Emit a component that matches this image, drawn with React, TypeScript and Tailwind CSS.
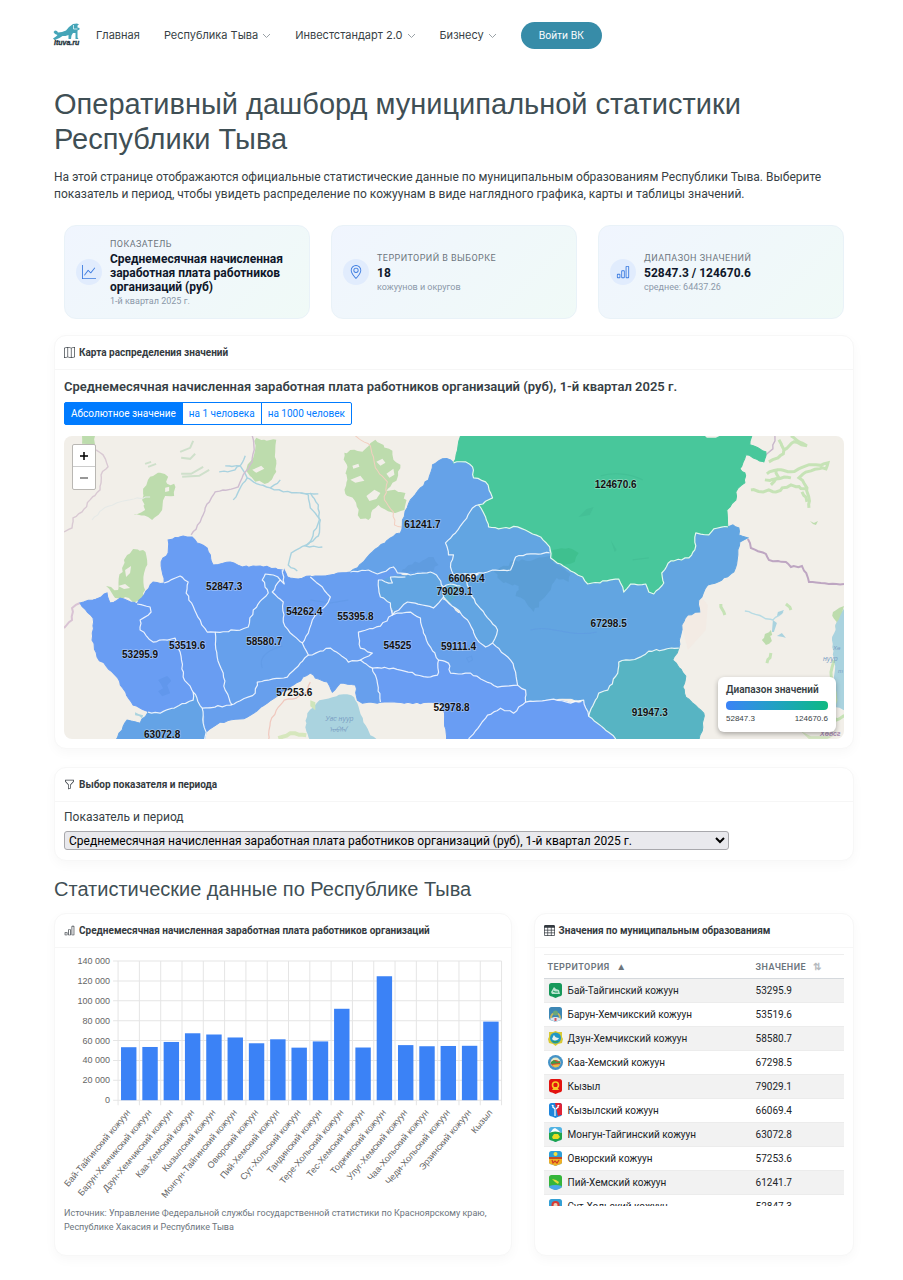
import { useState, type ReactNode } from "react";
import { BsBarChart, BsFunnel, BsGeoAlt, BsGraphUp, BsMap, BsTable } from "react-icons/bs";

type Point = [number, number];

const navItems = [
  { label: "Главная", menu: false },
  { label: "Республика Тыва", menu: true },
  { label: "Инвестстандарт 2.0", menu: true },
  { label: "Бизнесу", menu: true },
];

const indicator = "Среднемесячная начисленная заработная плата работников организаций (руб), 1-й квартал 2025 г.";

const chartData = [
  { name: "Бай-Тайгинский кожуун", value: 53295.9 },
  { name: "Барун-Хемчикский кожуун", value: 53519.6 },
  { name: "Дзун-Хемчикский кожуун", value: 58580.7 },
  { name: "Каа-Хемский кожуун", value: 67298.5 },
  { name: "Кызылский кожуун", value: 66069.4 },
  { name: "Монгун-Тайгинский кожуун", value: 63072.8 },
  { name: "Овюрский кожуун", value: 57253.6 },
  { name: "Пий-Хемский кожуун", value: 61241.7 },
  { name: "Сут-Хольский кожуун", value: 52847.3 },
  { name: "Тандинский кожуун", value: 59111.4 },
  { name: "Тере-Хольский кожуун", value: 91947.3 },
  { name: "Тес-Хемский кожуун", value: 52978.8 },
  { name: "Тоджинский кожуун", value: 124670.6 },
  { name: "Улуг-Хемский кожуун", value: 55395.8 },
  { name: "Чаа-Хольский кожуун", value: 54262.4 },
  { name: "Чеди-Хольский кожуун", value: 54525 },
  { name: "Эрзинский кожуун", value: 54700 },
  { name: "Кызыл", value: 79029.1 },
];

// Small noise that depends only on the position, so shared borders stay shared
const noise = (x: number, y: number) => {
  const n = Math.sin(x * 12.9898 + y * 78.233) * 43758.5453;
  return (n - Math.floor(n) - 0.5) * 2;
};

// Turns "x,y x,y" into a slightly ragged path, like a real border line
const rough = (points: string, closed = false, amount = 0.9) => {
  const list = points.split(" ").map((p) => p.split(",").map(Number) as Point);
  if (closed) list.push(list[0]);
  let d = `M${list[0][0]} ${list[0][1]}`;
  for (let i = 1; i < list.length; i++) {
    const [x1, y1] = list[i - 1];
    const [x2, y2] = list[i];
    const steps = Math.max(1, Math.round(Math.hypot(x2 - x1, y2 - y1) / 4));
    for (let s = 1; s <= steps; s++) {
      const x = x1 + ((x2 - x1) * s) / steps;
      const y = y1 + ((y2 - y1) * s) / steps;
      const k = s === steps ? 0 : amount;
      d += `L${(x + noise(x, y) * k).toFixed(1)} ${(y + noise(y, x) * k).toFixed(1)}`;
    }
  }
  return closed ? d + "Z" : d;
};

const regions = [
  { fill: "#699df3", d: "80,603 93,600 107,593 110,603 120,598 137,604 150,607 151,612 140,620 140,630 153,642 175,638 180,652 183,677 193,692 193,700 160,713 150,713 133,705 115,675 97,657 92,640 93,618" },
  { fill: "#699df2", d: "137,604 153,582 164,583 180,576 188,582 186,593 200,620 207,632 215,632 217,657 223,673 225,690 232,705 202,708 193,692 183,677 180,652 175,638 153,642 140,630 140,620 151,612 150,607" },
  { fill: "#699df3", d: "164,583 161,562 168,553 168,540 183,536 192,537 197,543 207,548 213,565 230,562 242,567 260,566 282,570 287,577 280,580 273,575 265,574 262,580 268,593 253,610 248,627 240,630 215,632 207,632 200,620 186,593 188,582 180,576" },
  { fill: "#66a0ec", d: "215,632 240,630 248,627 253,610 268,593 262,580 265,574 273,575 280,580 272,592 283,602 283,622 290,633 302,643 308,655 287,677 257,682 255,693 232,705 225,690 223,673 217,657" },
  { fill: "#689df1", d: "280,580 284,570 287,577 298,579 310,576 322,587 330,597 328,602 317,613 312,620 308,633 302,643 290,633 283,622 283,602 272,592" },
  { fill: "#689ef0", d: "310,577 330,575 350,572 368,570 377,574 393,567 397,573 405,577 390,577 378,582 380,597 390,603 392,615 380,626 358,632 360,648 372,653 360,660 348,662 330,648 310,655 308,655 302,643 308,633 312,620 317,613 328,602 330,597 322,587" },
  { fill: "#65a2e8", d: "350,572 363,562 372,552 390,538 400,533 402,520 410,500 420,488 428,480 432,465 442,459 450,460 453,463 465,462 472,467 473,478 485,482 492,498 478,505 472,508 463,522 455,533 445,543 448,555 453,555 450,567 453,575 443,587 438,578 430,572 410,575 397,573 393,567 377,574 368,570" },
  { fill: "#62a5e1", d: "549,553 580,560 653,580 694,533 713,529 727,527 732,525 738,528 738,535 747,538 739,542 737,555 733,572 717,582 707,585 698,600 699,612 687,615 681,625 678,648 648,651 637,658 618,662 617,673 607,690 598,693 588,716 583,702 570,698 553,699 525,702 525,690 517,685 515,672 510,660 492,643 497,630 475,603 466,580 483,573 492,570 510,570 515,557 530,554" },
  { fill: "#62a5e2", d: "478,505 485,517 488,527 498,529 517,527 540,537 549,547 549,553 530,554 515,557 510,570 492,570 483,573 466,574 470,593 475,603 497,630 492,643 485,647 477,640 467,620 443,597 440,603 433,608 407,602 393,613 390,603 380,597 378,582 390,577 410,575 430,572 438,578 443,587 453,575 450,567 453,555 448,555 445,543 455,533 463,522 472,508" },
  { fill: "#5dacd2", d: "444,588 450,584 460,586 457,594 449,602 443,597" },
  { fill: "#689df1", d: "392,615 397,613 410,612 420,618 423,633 430,647 438,660 437,675 427,677 393,668 372,668 360,660 372,653 360,648 358,632 380,626" },
  { fill: "#66a0eb", d: "393,613 407,602 433,608 443,600 467,620 477,640 485,647 492,643 510,660 515,672 517,685 497,687 470,673 450,673 448,663 438,660 430,647 423,633 420,618 410,612" },
  { fill: "#699df3", d: "360,660 372,668 393,668 427,677 437,675 438,660 448,663 450,673 470,673 497,687 517,685 525,690 525,702 553,699 570,703 583,702 588,716 603,728 617,741 446,741 444,713 440,703 380,702 377,683" },
  { fill: "#679fed", d: "202,708 230,705 255,693 257,682 287,677 308,655 330,648 348,662 360,660 372,668 377,683 380,702 362,703 357,700 355,685 340,683 332,692 327,682 315,678 310,673 293,685 267,703 247,717 220,722 206,732" },
  { fill: "#64a3e6", d: "148,712 160,713 193,700 193,692 202,708 203,723 206,732 204,741 115,741 122,730 127,720 140,723" },
  { fill: "#57b4c3", d: "678,648 648,651 637,658 618,662 617,673 607,690 598,693 588,716 603,728 617,741 698,741 702,727 703,713 685,697 682,687 685,676 672,660" },
  { fill: "#48c79b", d: "460,433 752,433 749,445 765,452 763,462 745,455 739,469 744,473 744,483 735,492 735,500 726,510 727,527 713,529 708,535 695,533 694,550 688,558 670,561 661,573 663,583 653,594 648,592 645,584 630,584 623,592 618,579 587,584 582,577 570,571 550,558 549,547 540,537 517,527 498,529 488,527 485,517 478,505 492,498 485,482 473,478 472,467 465,462 453,463 457,450" },
];

const borders = [
  "137,604 150,607 151,612 140,620 140,630 153,642 175,638 180,652 183,677 193,692 202,708 203,723 206,732 204,741",
  "148,712 160,713 193,700 193,692",
  "164,583 180,576 188,582 186,593 200,620 207,632 215,632 217,657 223,673 225,690 232,705",
  "202,708 230,705 255,693 257,682 287,677 308,655 302,643 290,633 283,622 283,602 272,592 280,580 273,575 265,574 262,580 268,593 253,610 248,627 240,630 215,632",
  "282,570 284,584 280,580",
  "310,577 322,587 330,597 328,602 317,613 312,620 308,633 302,643",
  "308,655 330,648 348,662 360,660 372,668 377,683 380,702",
  "360,660 372,653 360,648 358,632 380,626 392,615 397,613 410,612 420,618 423,633 430,647 438,660 437,675 427,677 393,668 372,668",
  "350,572 368,570 377,574 393,567 397,573 410,575 430,572 438,578 443,587 450,584 460,586",
  "405,577 390,577 392,583 378,580 380,597 390,603 392,615 407,602 433,608 443,597 443,587",
  "443,597 467,620 477,640 485,647 492,643 497,630 475,603 470,593 466,580 470,574",
  "453,575 483,573 492,570 510,570 515,557 530,554 549,553",
  "453,575 450,567 453,555 448,555 445,543 455,533 463,522 472,508 478,505",
  "492,643 510,660 515,672 517,685 497,687 470,673 450,673 448,663 438,660",
  "517,685 525,690 525,702 513,713 500,708 487,715 467,741",
  "525,702 553,699 570,703 583,700 588,716",
  "678,648 648,651 637,658 618,662 617,673 607,690 598,693 588,716 603,728 617,741",
  "727,527 713,529 708,535 695,533 694,550 688,558 670,561 661,573 663,583 653,594 648,592 645,584 630,584 623,592 618,579 587,584 582,577 570,571 550,558 549,547 540,537 517,527 498,529 488,527 485,517 478,505 492,498 485,482 473,478 472,467 465,462 453,463",
];

const forests = [
  "82,436 95,436 95,445 82,444",
  "143,489 150,477 160,473 168,477 167,484 174,484 174,496 165,496 162,510 152,520 148,517 133,515 145,510 142,500",
  "127,555 133,549 143,550 147,560 144,573 145,590 143,600 135,602 125,597 115,598 106,586 118,590 122,568",
  "256,438 264,440 276,440 276,472 268,483 255,482 246,470 253,458",
  "344,453 354,450 362,452 375,440 392,451 393,460 400,465 396,481 386,491 400,492 405,493 404,510 395,513 378,505 372,510 368,520 360,519 354,500 345,494 347,480",
  "832,612 843,606 843,625 836,630",
  "764,634 770,630 771,641 765,645 761,640",
  "809,521 813,523 817,521 815,525 812,524",
];

const greenStrokes = [
  "778,440 783,450 777,458 768,462",
  "783,450 793,442 806,446 790,436",
  "766,474 780,470 790,472 805,466 827,463 825,469 810,471 798,478 806,488 808,508",
  "750,490 775,492 790,485 805,489",
  "770,485 778,478 775,470",
  "764,480 790,478",
  "801,492 806,502",
  "720,604 724,615",
  "770,653 766,663",
  "785,604 790,610",
];

const rivers = [
  "219,472 231,471 240,466 247,478 260,485 270,488 283,492 300,493 308,495 310,508 320,520 318,536 306,545 291,553 288,565 297,571",
  "310,493 318,505 319,520 311,540 305,546 322,547",
  "225,466 240,466 245,456",
  "247,478 239,490 233,500",
  "270,488 280,480",
  "300,493 318,494",
];

const mapLabels = [
  { x: 615, y: 488, text: "124670.6" },
  { x: 422, y: 528, text: "61241.7" },
  { x: 466, y: 582, text: "66069.4" },
  { x: 454, y: 595, text: "79029.1" },
  { x: 224, y: 590, text: "52847.3" },
  { x: 304, y: 615, text: "54262.4" },
  { x: 355, y: 620, text: "55395.8" },
  { x: 608, y: 627, text: "67298.5" },
  { x: 264, y: 645, text: "58580.7" },
  { x: 187, y: 649, text: "53519.6" },
  { x: 397, y: 649, text: "54525" },
  { x: 458, y: 650, text: "59111.4" },
  { x: 140, y: 658, text: "53295.9" },
  { x: 294, y: 696, text: "57253.6" },
  { x: 451, y: 711, text: "52978.8" },
  { x: 649, y: 716, text: "91947.3" },
  { x: 162, y: 738, text: "63072.8" },
];

const RegionMap = () => (
  <svg
    className="block h-full w-full font-['Liberation_Sans',sans-serif]"
    viewBox="64 436 779 303"
    preserveAspectRatio="xMidYMid slice"
    role="img"
    aria-label="Карта распределения значений"
  >
    <rect x="0" y="400" width="1000" height="400" fill="#f2efe9" />
    {forests.map((d) => (
      <path key={d} d={rough(d, true, 1.6)} fill="#bddcad" />
    ))}
    <path
      d="M125 570l6-4-1 7-4 4zM252 470l9-4 3 3-8 4zM350 480l10-4 4 5-9 2zM376 462l6-3 3 4-5 3zM366 496l8-6 6 3-4 6-7 2zM352 466l6-2 1 3-6 2zM386 474l7-5 1 6-5 3zM118 586l7-2 5 4-6 1zM165 488l4-1v4l-4 1z"
      fill="#f2efe9"
    />
    {greenStrokes.map((d) => (
      <path key={d} d={rough(d, false, 1.5)} fill="none" stroke="#c6e3b6" strokeWidth="3" />
    ))}
    <path d="M180 452l10-4 3-7m-12 17l9 1 5-5m-47 13l8-3m25 10l10 0 12-7M182 477l17-1 10-6M145 464l6-2" fill="none" stroke="#cfe0cb" strokeWidth="2" />
    {rivers.map((d) => (
      <path key={d} d={rough(d)} fill="none" stroke="#a9d2df" strokeWidth="1.4" />
    ))}
    <path d={rough("92,520 102,510 120,502 134,499 150,497")} fill="none" stroke="#e5e9e7" strokeWidth="1" />
    <path d={rough("96,450 103,455 108,467 101,475 100,490 90,500 82,512 73,518 72,528 64,532")} fill="none" stroke="#d9c9d3" strokeWidth="1.4" />
    <path d={rough("191,535 200,522 205,508 215,492 238,487 243,475 252,462 254,450 252,436")} fill="none" stroke="#cfbdd0" strokeWidth="1.4" />
    <path d={rough("80,603 72,608 72,620 64,628")} fill="none" stroke="#d9c3d4" strokeWidth="2" />
    <path d={rough("747,539 750,548 765,554 768,560 785,562 790,567 801,566 808,582 820,583 843,584")} fill="none" stroke="#bea6c2" strokeWidth="2" />
    <path d={rough("774,436 772,449 765,455")} fill="none" stroke="#c8b6cb" strokeWidth="1.4" />
    <path d={rough("355,436 370,446 375,468 387,482 384,500 393,512 394,525 401,527")} fill="none" stroke="#f3cfc0" strokeWidth="1" />
    <path d="M681 625l18-30 8 10-2 25-18 20z" fill="#f3ebe4" />
    <path d={rough("744,611 762,617 772,620 782,612")} fill="none" stroke="#b7dbe4" strokeWidth="1.4" />
    <path d="M772 620l4 3-3 9-2 0zM777 612l6-2-2 4-5 2zM776 636l5-3 4 5-3-1z" fill="#aad3df" />

    {/* Lakes */}
    <path d={rough("313,707 319,700 332,697 343,694 351,695 357,703 363,722 370,735 381,741 310,741 305,727 307,713", true)} fill="#aad3df" />
    <path d={rough("836,622 845,606 845,710 835,707 831,690 834,670 831,640", true)} fill="#aad3df" />
    <path d={rough("833,660 830,672 835,700 829,712 835,720 845,715", false)} fill="none" stroke="#c6e3b6" strokeWidth="3" />
    <path d={rough("135,712 143,715 142,718 135,715", true)} fill="#aad3df" />
    <path d={rough("268,741 270,722 276,710 284,700 296,698 306,692 310,682")} fill="none" stroke="#f0c7bd" strokeWidth="1.2" />
    <path d={rough("278,738 290,733 306,735")} fill="none" stroke="#d6e7bd" strokeWidth="4" />
    <path d="M310 700l5 2v8l-5-4z" fill="#cfe5bb" />
    <path d="M800 731l10 5h22l-6 3h-18z" fill="#d5e6c2" />
    <g fill="#7b9fc4" fontSize="7" fontStyle="italic">
      <text x="325" y="721">Увс нуур</text>
      <text x="329" y="732">ᠤᠪᠰᠠ</text>
      <text x="832" y="650" fontSize="6">Хө</text>
      <text x="822" y="661">нуур</text>
      <text x="837" y="673" fontSize="6">т</text>
    </g>
    <text x="819" y="736" fontSize="7" fontStyle="italic" fontWeight="bold" fill="#a487ad">Хөвсг</text>

    {regions.map(({ fill, d }) => (
      <path key={d} d={rough(d, true)} fill={fill} stroke={fill} strokeWidth="1" />
    ))}

    {/* Relief and water seen through the fills */}
    <path
      d={rough("493,571 508,566 514,560 530,561 549,556 553,563 570,574 568,582 556,578 550,590 541,600 533,612 524,600 515,596 518,586 503,583", true, 1.6)}
      fill="#5799cf"
      opacity=".6"
    />
    <path d={rough("398,575 408,565 433,557 438,565 430,573 410,571", true, 1.4)} fill="#5c98da" opacity=".6" />
    <path d={rough("552,550 568,548 578,553 574,562 562,566 552,561", true)} fill="#3fc08f" />
    <path d={rough("158,680 167,676 171,681 167,685 170,693 162,696 158,691 163,688", true)} fill="#6197ec" />
    <path d="M578 517l8-8 7-2-4 8zM610 540l6 10-2 2z" fill="#44c096" />
    <path d="M600 476c14-4 30-2 42 4M632 560l16-2" fill="none" stroke="#44c096" strokeWidth="1.2" />
    <path d="M310 600l20 3 18-3M262 668c-4-12 6-18 20-22M530 630c20-6 40 8 66 2M466 658l5-2 1 4-4 2z" fill="none" stroke="#5d98e4" strokeWidth="1" opacity=".5" />

    {borders.map((d) => (
      <path key={d} d={rough(d)} fill="none" stroke="#fff" strokeWidth="1.200" strokeOpacity=".85" strokeLinejoin="round" />
    ))}
    <path d="M704 436h15l-4 2h-9z" fill="#f2efe9" />

    <g fontSize="10" fontWeight="bold" fill="#111" textAnchor="middle">
      {mapLabels.map(({ x, y, text }) => (
        <text key={text} x={x} y={y} className="[paint-order:stroke]" stroke="#fff" strokeOpacity=".35" strokeWidth="1.4">
          {text}
        </text>
      ))}
    </g>
  </svg>
);

const BarChart = () => {
  const left = 54;
  const bottom = 145;
  const step = 383 / 18;
  const scale = 139 / 140000;
  const ticks = [0, 20000, 40000, 60000, 80000, 100000, 120000, 140000];
  return (
    <svg
      className="block w-full overflow-visible font-['Liberation_Sans',sans-serif]"
      viewBox="0 0 437 245"
      role="img"
      aria-label="Среднемесячная начисленная заработная плата по кожуунам"
    >
      {ticks.map((tick) => {
        const y = bottom - tick * scale;
        return (
          <g key={tick}>
            <path d={`M${left - 5} ${y}H437`} stroke="#e5e5e5" />
            <text x={left - 8} y={y + 3} fontSize="9" fill="#666" textAnchor="end">
              {tick === 0 ? "0" : `${tick / 1000} 000`}
            </text>
          </g>
        );
      })}
      {Array.from({ length: 19 }, (_, i) => (
        <path key={i} d={`M${left + i * step} 6V${bottom + 5}`} stroke="#e5e5e5" />
      ))}
      {chartData.map(({ name, value }, i) => {
        const x = left + (i + 0.5) * step;
        return (
          <g key={name}>
            <rect x={x - 7.7} y={bottom - value * scale} width="15.4" height={value * scale} fill="#3b82f6" />
            <text
              transform={`translate(${x - 1} ${bottom + 10}) rotate(-50)`}
              y="4"
              fontSize="9"
              fill="#666"
              textAnchor="end"
            >
              {name}
            </text>
          </g>
        );
      })}
    </svg>
  );
};

const shield = "M1 3.5Q1 1 3.5 1H11.500Q14 1 14 3.500V12Q14 14 11 14.500L7.500 16L4 14.500Q1 14 1 12Z";

const emblems: ReactNode[] = [
  <>
    <path d={shield} fill="#16985a" />
    <path d="M3 10l3-5 2 2 3 1 1 4H4z" fill="#b9e3cf" />
    <path d="M5 9l2 1 3 0" stroke="#16985a" fill="none" />
  </>,
  <>
    <path d={shield} fill="#3d87b5" />
    <path d="M3 12a4.500 5 0 0 1 9 0" fill="none" stroke="#c6b75f" strokeWidth="2" />
    <circle cx="7.500" cy="7" r="2.500" fill="#69a77b" />
    <path d="M1 13l5-2h3l5 2-6 3z" fill="#d9e6ef" />
    <path d="M6.500 12h2v3h-2z" fill="#d4545d" />
  </>,
  <>
    <path d="M1 2l4 0 2.500-1L10 2h4v5l1 2-1 4-4 1-2.500 2L5 14l-4-1-1-4 1-2z" fill="#d8c932" />
    <circle cx="7.500" cy="8" r="5.500" fill="#2097c4" />
    <path d="M4 9c3 3 6 1 7-1-3 0-4-1-5-3-1 1-1 2-2 4z" fill="#e9f3ee" />
    <path d="M4 11c2 2 5 2 7 0z" fill="#2f9f57" />
  </>,
  <>
    <circle cx="7.500" cy="8.500" r="7.500" fill="#4593c7" />
    <circle cx="7.500" cy="8.500" r="5" fill="#e7e8c8" />
    <path d="M2.500 9c3-4 7-4 10 0-1 5-8 6-10 0z" fill="#d34c30" />
    <path d="M3 8l3-2 3 2 3-1v2l-9 1z" fill="#3f9848" />
    <path d="M4 11l8-1-2 3H6z" fill="#e6c044" />
  </>,
  <>
    <path d={shield} fill="#e3130f" />
    <circle cx="7.500" cy="7" r="3" fill="none" stroke="#f6ca25" strokeWidth="1.600" />
    <path d="M4 12l2-3h3l2 3z" fill="#f6ca25" />
  </>,
  <>
    <path d={shield} fill="#1f86dc" />
    <path d="M7 1h5q2 0 2 3v9q-3 0-4 1z" fill="#df2436" />
    <path d="M4 3l2 3 1 1v7M11 3L9 6 8 7M5 3v3m5-3v3" stroke="#fff" strokeWidth="1.200" fill="none" />
  </>,
  <>
    <path d={shield} fill="#52b3e3" />
    <path d="M2 7l3-4 2-1 3 2 3 3z" fill="#fff" />
    <path d="M1 7q6-3 13 0v5q0 2-3 2.500L7.500 16 4 14.500Q1 14 1 12z" fill="#1fa54a" />
    <path d="M4 11l2-3h4l2 3-2 2H5z" fill="#e7dd20" />
  </>,
  <>
    <path d={shield} fill="#2d9ed6" />
    <circle cx="7.500" cy="4" r="2" fill="#f5df3a" />
    <path d="M1 7h13v3H1z" fill="#c54b22" />
    <path d="M1 9h13v3q0 2-3 2.500L7.500 16 4 14.500Q1 14 1 12z" fill="#efb026" />
    <path d="M4 10l1 3 2-2 2 2 2-3" stroke="#cf3e23" strokeWidth="1.200" fill="none" />
  </>,
  <>
    <path d={shield} fill="#35b53a" />
    <path d="M4 5l4 1 3 2-1 2-3-2z" fill="#ddde3a" />
    <path d="M1 12q6-2 13 0-1 3-6.500 4Q2 15 1 12z" fill="#4aa6e8" />
  </>,
  <>
    <path d={shield} fill="#35a0d5" />
    <circle cx="7.500" cy="7" r="4" fill="#d93a34" />
    <circle cx="7.500" cy="7" r="2" fill="#ecd2b8" />
  </>,
];

const tableRows = [
  ["Бай-Тайгинский кожуун", "53295.9"],
  ["Барун-Хемчикский кожуун", "53519.6"],
  ["Дзун-Хемчикский кожуун", "58580.7"],
  ["Каа-Хемский кожуун", "67298.5"],
  ["Кызыл", "79029.1"],
  ["Кызылский кожуун", "66069.4"],
  ["Монгун-Тайгинский кожуун", "63072.8"],
  ["Овюрский кожуун", "57253.6"],
  ["Пий-Хемский кожуун", "61241.7"],
  ["Сут-Хольский кожуун", "52847.3"],
];

const Card = ({ icon, title, children }: { icon: ReactNode; title: string; children: ReactNode }) => (
  <section className="rounded-xl border border-[#f7f7f7] bg-white shadow-[0_4px_12px_rgba(0,0,0,0.03)]">
    <h3 className="flex h-[34px] items-center gap-1 border-b border-[#f6f6f6] px-[9px] text-[10px] font-bold text-[#343a40]">
      <span className="text-[11px]">{icon}</span>
      {title}
    </h3>
    {children}
  </section>
);

const StatCard = ({ icon, label, value, note }: { icon: ReactNode; label: string; value: string; note: string }) => (
  <div className="flex h-[94px] items-center gap-2 rounded-xl border border-[#e9f2f8] bg-linear-135 from-[#f0f5fe] to-[#f0faf7] px-[11px]">
    <div className="flex size-[26px] shrink-0 items-center justify-center rounded-full bg-[#e1ecfd] text-[14px] text-[#3b7be0]">
      {icon}
    </div>
    <div>
      <div className="text-[9px] leading-[16px] tracking-wider text-[#6c757d]">{label}</div>
      <div className="text-[12px] leading-[14px] font-bold text-[#0f172a]">{value}</div>
      <div className="text-[9px] leading-[14px] text-[#8b98a9]">{note}</div>
    </div>
  </div>
);

const Logo = () => (
  <svg className="h-6 w-[26px] overflow-visible" viewBox="0 0 26 24" role="img" aria-label="ituva.ru">
    <path
      d="M1 7.500l2 .500 1 1.500 4-.500 4-1.500 3-3.500 4-3 4-.500 2 1-1.500 1 0 2 2 .500 0 1.500-2 1 0 7 1 1.500h-3l0-6-2.500 0-1.500 2.500-.500 3.500h-2.500l0-4-3 1-3 0-3 2-5 2-1.500-1.500 3-2 1.500-1.500-2.500-1-1.500-2z"
      fill="#45a5b8"
    />
    <path d="M19.500 2l0 4 4 0" stroke="#e8f6f8" strokeWidth=".8" fill="none" />
    <text x="0" y="22" fontSize="7" fontWeight="bold" fontStyle="italic" fill="#20313a" stroke="#20313a" strokeWidth=".3" fontFamily="Liberation Sans, sans-serif">
      ituva.ru
    </text>
  </svg>
);

const App = () => {
  const modes = ["Абсолютное значение", "на 1 человека", "на 1000 человек"];
  const [mode, setMode] = useState(0);

  return (
    <div className="min-h-screen bg-white pr-[49px] pb-6 pl-[54px] font-['Roboto',sans-serif] text-[#373f45]">
      <header className="flex h-[70px] items-center gap-4">
        <a href="#">
          <Logo />
        </a>
        <nav className="flex items-center gap-6 font-['Inter',sans-serif] text-[11px] text-[#373f45]">
          {navItems.map(({ label, menu }) => (
            <a key={label} href="#" className="flex items-center gap-1 whitespace-nowrap">
              {label}
              {menu && (
                <svg className="size-[9px]" viewBox="0 0 9 9" fill="none" stroke="#9aa1a6">
                  <path d="M1 3l3.500 3.500L8 3" />
                </svg>
              )}
            </a>
          ))}
          <button className="h-[27px] rounded-full bg-[#378ca8] px-[18px] text-[10px] text-white">Войти ВК</button>
        </nav>
      </header>

      <main>
        <h1 className="mt-[17px] font-['Liberation_Sans',sans-serif] text-[29px] leading-[35px] text-[#3f4f55]">
          Оперативный дашборд муниципальной статистики Республики Тыва
        </h1>
        <p className="mt-3 text-[12px] leading-[17px]">
          На этой странице отображаются официальные статистические данные по муниципальным образованиям Республики Тыва. Выберите показатель и период, чтобы увидеть распределение по кожуунам в виде наглядного графика, карты и таблицы значений.
        </p>

        <div className="mt-[22px] grid grid-cols-3 gap-[21px] px-[10px]">
          <StatCard
            icon={<BsGraphUp />}
            label="ПОКАЗАТЕЛЬ"
            value="Среднемесячная начисленная заработная плата работников организаций (руб)"
            note="1-й квартал 2025 г."
          />
          <StatCard icon={<BsGeoAlt />} label="ТЕРРИТОРИЙ В ВЫБОРКЕ" value="18" note="кожуунов и округов" />
          <StatCard icon={<BsBarChart />} label="ДИАПАЗОН ЗНАЧЕНИЙ" value="52847.3 / 124670.6" note="среднее: 64437.26" />
        </div>

        <div className="mt-4">
          <Card icon={<BsMap />} title="Карта распределения значений">
            <div className="px-[9px] pt-2 pb-[9px]">
              <h4 className="text-[13px] leading-[18px] font-semibold">{indicator}</h4>
              <div className="mt-[6px] flex">
                {modes.map((label, i) => (
                  <button
                    key={label}
                    onClick={() => setMode(i)}
                    className={`-ml-px h-[23px] border border-[#007bff] px-[6px] text-[10px] first:ml-0 first:rounded-l-xs last:rounded-r-xs ${
                      mode === i ? "bg-[#007bff] text-white" : "bg-white text-[#007bff]"
                    }`}
                  >
                    {label}
                  </button>
                ))}
              </div>
              <div className="relative mt-[11px] h-[303px] overflow-hidden rounded-lg">
                <RegionMap />
                <div className="absolute top-2 left-2 flex w-6 flex-col rounded-xs border border-[#b9b7b3] bg-white">
                  <button aria-label="Приблизить" className="flex h-[22px] items-center justify-center border-b border-[#ccc]">
                    <svg className="size-[10px]" viewBox="0 0 10 10" stroke="#000" strokeWidth="1.500"><path d="M1 5h8M5 1v8" /></svg>
                  </button>
                  <button aria-label="Отдалить" className="flex h-[22px] items-center justify-center">
                    <svg className="size-[10px]" viewBox="0 0 10 10" stroke="#333" strokeWidth="1.200"><path d="M1 5h8" /></svg>
                  </button>
                </div>
                <div className="absolute right-2 bottom-[7px] w-[118px] rounded-md bg-white p-2 shadow-[0_2px_5px_rgba(0,0,0,0.3)]">
                  <div className="text-[10px] leading-[10px] font-semibold">Диапазон значений</div>
                  <div className="mt-[6px] h-[9px] rounded-sm bg-linear-to-r from-[#3b82f6] to-[#10b981]" />
                  <div className="mt-1 flex justify-between font-['Liberation_Sans',sans-serif] text-[8px] leading-[10px]">
                    <span>52847.3</span>
                    <span>124670.6</span>
                  </div>
                </div>
              </div>
            </div>
          </Card>
        </div>

        <div className="mt-[18px]">
          <Card icon={<BsFunnel />} title="Выбор показателя и периода">
            <div className="px-[9px] pt-[6px] pb-[10px]">
              <label htmlFor="indicator" className="block text-[12px] leading-[18px]">
                Показатель и период
              </label>
              <select
                id="indicator"
                className="mt-[5px] block h-[19px] w-[665px] max-w-full rounded-[3px] border border-[#a8a8ac] bg-[#e9e9ed] text-[12px] leading-[16px] text-black"
              >
                <option>{indicator}</option>
              </select>
            </div>
          </Card>
        </div>

        <h2 className="mt-[15px] font-['Liberation_Sans',sans-serif] text-[20px] leading-[26px] text-[#3f4f55]">
          Статистические данные по Республике Тыва
        </h2>

        <div className="mt-[11px] grid grid-cols-[457fr_320fr] gap-[22px]">
          <Card icon={<BsBarChart />} title="Среднемесячная начисленная заработная плата работников организаций">
            <div className="px-[9px] pt-[7px] pb-[21px]">
              <BarChart />
              <p className="mt-[6px] text-[9px] leading-[14px] text-[#6c757d]">
                Источник: Управление Федеральной службы государственной статистики по Красноярскому краю, Республике Хакасия и Республике Тыва
              </p>
            </div>
          </Card>

          <Card icon={<BsTable />} title="Значения по муниципальным образованиям">
            <div className="mx-[9px] mt-[6px] h-[252px] overflow-hidden border-t border-[#eee]">
              <table className="w-full table-fixed border-collapse text-left text-[10px] text-[#212529]">
                <thead>
                  <tr className="h-[23px] border-b border-[#d5d9dd] text-[9px] tracking-wider text-[#6c757d]">
                    <th className="w-[208px] pl-1 font-semibold">
                      ТЕРРИТОРИЯ <span className="ml-1 text-[10px]">▲</span>
                    </th>
                    <th className="pl-1 font-semibold">
                      ЗНАЧЕНИЕ <span className="ml-1 text-[10px] text-[#b5b9bd]">⇅</span>
                    </th>
                  </tr>
                </thead>
                <tbody>
                  {tableRows.map(([name, value], i) => (
                    <tr key={name} className="h-[24px] border-b border-[#ececec] odd:bg-[#f2f2f2]">
                      <td className="pl-1">
                        <div className="flex items-center gap-[5px]">
                          <svg className="h-[17px] w-[15px] shrink-0" viewBox="0 0 15 17">
                            {emblems[i]}
                          </svg>
                          {name}
                        </div>
                      </td>
                      <td className="pl-1">{value}</td>
                    </tr>
                  ))}
                </tbody>
              </table>
            </div>
          </Card>
        </div>
      </main>
    </div>
  );
};

export default App;
